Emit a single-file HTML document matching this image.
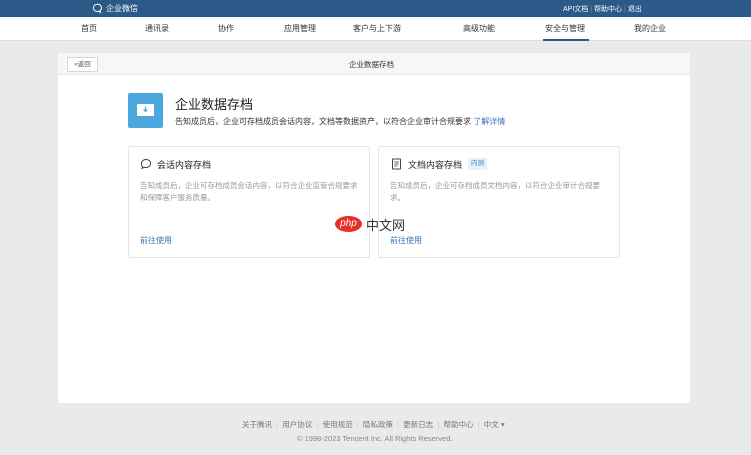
<!DOCTYPE html>
<html><head><meta charset="utf-8"><style>
*{margin:0;padding:0;box-sizing:border-box}
body{width:751px;height:455px;background:#e9eaec;font-family:"Liberation Sans","Noto Sans CJK SC",sans-serif;position:relative;overflow:hidden;color:#333}
.a{position:absolute;white-space:nowrap}
.top{left:0;top:0;width:751px;height:17px;background:#2b5a88}
.nav{left:0;top:17px;width:751px;height:24px;background:#fff;border-bottom:1px solid #dcdde0}
.n{top:23px;font-size:8px;color:#333;transform:translateX(-50%)}
.card{left:58px;top:53px;width:632px;height:350px;background:#fff;border-radius:2px}
.hd{left:58px;top:53px;width:632px;height:22px;background:#f6f7f9;border-bottom:1px solid #e6e7ea}
.box{background:#fff;border:1px solid #e3e5e8;border-radius:2px}
.g{font-size:7.5px;color:#999;line-height:12px;white-space:normal}
.lk{font-size:8px;color:#3a75b5}
.f{font-size:7.5px;color:#777}
</style></head><body>
<div class="a top"></div>
<svg class="a" style="left:92px;top:3px" width="11" height="11" viewBox="0 0 11 11"><path d="M5.5 1.2a4 3.6 0 1 0 1.2 7l1.8 1.3-.4-2a4 3.6 0 0 0-2.6-6.3z" fill="none" stroke="#fff" stroke-width="1"/></svg>
<div class="a" style="left:106px;top:3px;font-size:8px;color:#fff">企业微信</div>
<div class="a" style="left:563px;top:4px;font-size:7px;color:#fff">API文档 <span style="color:#6f8fb0">|</span> 帮助中心 <span style="color:#6f8fb0">|</span> 退出</div>
<div class="a nav"></div>
<div class="a n" style="left:89px">首页</div>
<div class="a n" style="left:157px">通讯录</div>
<div class="a n" style="left:226px">协作</div>
<div class="a n" style="left:300px">应用管理</div>
<div class="a n" style="left:377px">客户与上下游</div>
<div class="a n" style="left:479px">高级功能</div>
<div class="a n" style="left:565px">安全与管理</div>
<div class="a n" style="left:650px">我的企业</div>
<div class="a" style="left:543px;top:39px;width:46px;height:2px;background:#2b5a88"></div>
<div class="a card"></div>
<div class="a hd"></div>
<div class="a" style="left:67px;top:57px;width:31px;height:15px;border:1px solid #d4d6da;background:#fff;font-size:6.5px;line-height:13px;text-align:center;color:#555">«返回</div>
<div class="a" style="left:349px;top:59px;font-size:7.5px">企业数据存档</div>
<div class="a" style="left:128px;top:93px;width:35px;height:35px;background:#4ba8dd;border-radius:2px"></div>
<div class="a" style="left:137px;top:104px;width:17px;height:12px;background:#fff;border-radius:1px"></div>
<svg class="a" style="left:141px;top:105px" width="9" height="9" viewBox="0 0 9 9"><path d="M4.5 1.5v5M2.5 4.5l2 2 2-2" stroke="#4ba8dd" stroke-width="1.2" fill="none"/></svg>
<div class="a" style="left:175px;top:94px;font-size:13px;color:#222">企业数据存档</div>
<div class="a" style="left:175px;top:116px;font-size:8px;color:#333">告知成员后，企业可存档成员会话内容，文档等数据资产，以符合企业审计合规要求 <span class="lk">了解详情</span></div>
<div class="a box" style="left:128px;top:146px;width:242px;height:112px"></div>
<div class="a box" style="left:378px;top:146px;width:242px;height:112px"></div>
<svg class="a" style="left:140px;top:158px" width="12" height="12" viewBox="0 0 12 12"><path d="M6 1.5c2.8 0 4.6 1.8 4.6 4s-1.8 4-4.6 4c-.7 0-1.3-.1-1.8-.3L2 10.5l.5-2C1.8 7.8 1.4 6.7 1.4 5.5c0-2.2 1.8-4 4.6-4z" fill="none" stroke="#333" stroke-width=".9"/></svg>
<div class="a" style="left:157px;top:158px;font-size:9px;color:#222">会话内容存档</div>
<div class="a g" style="left:140px;top:180px;width:222px">告知成员后，企业可存档成员会话内容，以符合企业监管合规要求和保障客户服务质量。</div>
<div class="a lk" style="left:140px;top:235px">前往使用</div>
<svg class="a" style="left:391px;top:158px" width="11" height="12" viewBox="0 0 11 12"><rect x="1.5" y="1" width="8" height="10" fill="none" stroke="#333" stroke-width=".9"/><path d="M3.3 4h4.4M3.3 6h4.4M3.3 8h3" stroke="#333" stroke-width=".8"/></svg>
<div class="a" style="left:408px;top:158px;font-size:9px;color:#222">文档内容存档</div>
<div class="a" style="left:468px;top:158px;width:19px;height:12px;background:#e6f1fc;color:#3a84d6;font-size:6.5px;line-height:12px;text-align:center">内测</div>
<div class="a g" style="left:390px;top:180px;width:222px">告知成员后，企业可存档成员文档内容，以符合企业审计合规要求。</div>
<div class="a lk" style="left:390px;top:235px">前往使用</div>
<div class="a" style="left:335px;top:216px;width:27px;height:16px;background:#e8302a;border-radius:50%;color:#fff;font-size:10px;text-align:center;line-height:15px;font-style:italic">php</div>
<div class="a" style="left:366px;top:215px;font-size:13px;color:#333">中文网</div>
<div class="a f" style="left:242px;top:419px">关于腾讯 <span style="color:#ccc">&nbsp;|&nbsp;</span> 用户协议 <span style="color:#ccc">&nbsp;|&nbsp;</span> 使用规范 <span style="color:#ccc">&nbsp;|&nbsp;</span> 隐私政策 <span style="color:#ccc">&nbsp;|&nbsp;</span> 更新日志 <span style="color:#ccc">&nbsp;|&nbsp;</span> 帮助中心 <span style="color:#ccc">&nbsp;|&nbsp;</span> 中文 ▾</div>
<div class="a f" style="left:297px;top:434px;color:#888">© 1998-2023 Tencent Inc. All Rights Reserved.</div>
</body></html>
